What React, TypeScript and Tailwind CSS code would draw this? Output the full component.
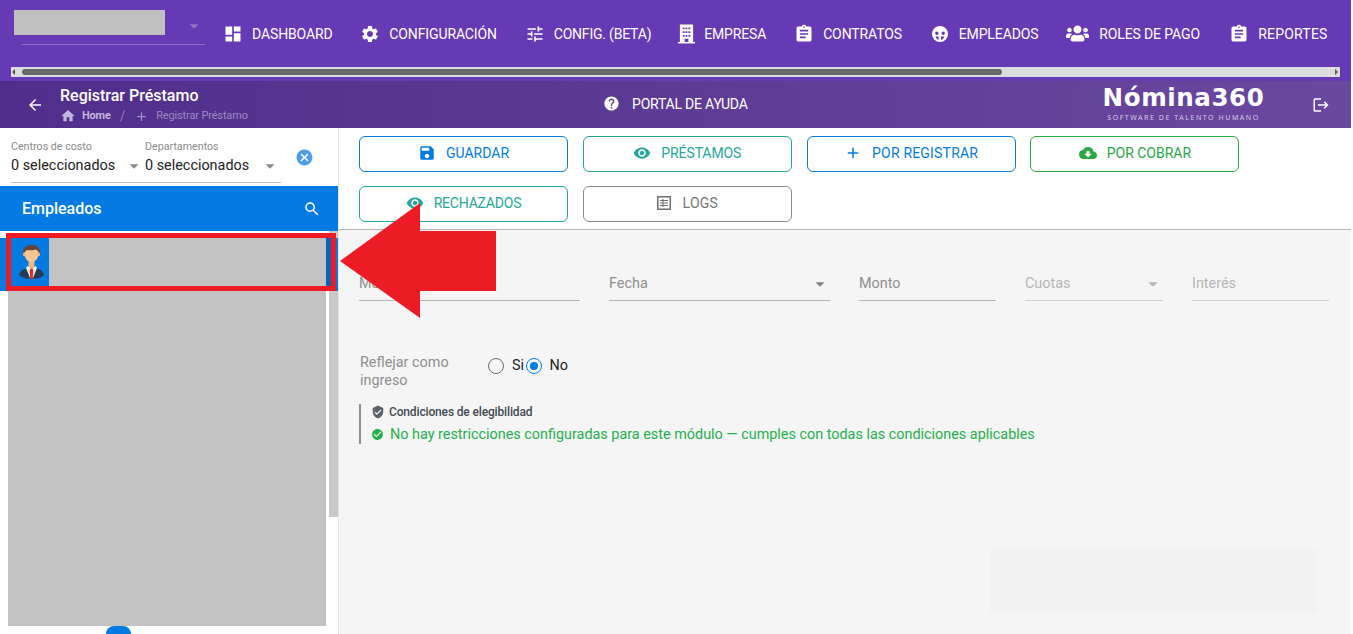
import React from "react";
import {
  MdDashboard, MdSettings, MdTune, MdAssignment, MdHelp, MdLogout, MdArrowBack,
  MdHome, MdAdd, MdSave, MdVisibility, MdCloudDownload, MdCancel, MdSearch, MdVerifiedUser, MdCheckCircle, MdArrowDropDown,
} from "react-icons/md";
import { FaUsers } from "react-icons/fa";

function BuildingIcon() {
  return (
    <svg width="17" height="20" viewBox="0 0 18 20" fill="currentColor">
      <path
        fillRule="evenodd"
        d="M2 0h14v18.500H2zM5 3v2h2V3zm3 0v2h2V3zm3 0v2h2V3zM5 7v2h2V7zm3 0v2h2V7zm3 0v2h2V7zM5 11v2h2v-2zm3 0v2h2v-2zm3 0v2h2v-2zM7 15v3.500h4V15z"
      />
      <rect x="0" y="18.500" width="18" height="1.500" />
    </svg>
  );
}

function FaceIcon() {
  return (
    <svg width="20" height="20" viewBox="0 0 20 20" fill="currentColor">
      <path
        fillRule="evenodd"
        d="M10 2a8 8 0 1 1 0 16 8 8 0 0 1 0-16zM6.800 7.500a1.700 1.700 0 1 0 0 3.400 1.700 1.700 0 0 0 0-3.400zm6.400 0a1.700 1.700 0 1 0 0 3.400 1.700 1.700 0 0 0 0-3.400zM5.500 12.500c.6 2 1.400 3 3 3.500v-3.500zm5.500 0V16c1.600-.5 2.800-1.500 3.500-3.500z"
      />
    </svg>
  );
}

function TableIcon() {
  return (
    <svg width="14" height="14" viewBox="0 0 14 14" fill="none" stroke="#6f6f6f">
      <rect x="0.750" y="0.750" width="12.500" height="12.500" strokeWidth="1.500" />
      <path d="M3 4.500h8M3 7h8M3 9.500h8M6 3v8" strokeWidth="1" />
    </svg>
  );
}

const nav = [
  { icon: <MdDashboard size={20} />, label: "DASHBOARD", cls: "gap-[9px]" },
  { icon: <MdSettings size={20} />, label: "CONFIGURACIÓN", cls: "gap-[9px]" },
  { icon: <MdTune size={20} />, label: "CONFIG. (BETA)", cls: "gap-[9px] tracking-[-0.2px]" },
  { icon: <BuildingIcon />, label: "EMPRESA", cls: "gap-[9px] -ml-[1px]" },
  { icon: <MdAssignment size={20} />, label: "CONTRATOS", cls: "gap-[9px]" },
  { icon: <FaceIcon />, label: "EMPLEADOS", cls: "gap-[9px]" },
  { icon: <FaUsers size={23} />, label: "ROLES DE PAGO", cls: "gap-[10px]" },
  { icon: <MdAssignment size={20} />, label: "REPORTES", cls: "gap-[9px] ml-[1.500px] tracking-[0.2px]" },
];

function Avatar() {
  return (
    <svg width="38" height="48" viewBox="0 0 38 48">
      <path d="M8 37c1-5 6-7 12.500-8 6.500 1 11.500 3 12.500 8-3 3-8 4-12.500 4S11 40 8 37z" fill="#263d54" />
      <path d="M16.500 28l4 2 4-2 1.500 2-4 10h-3l-4-10z" fill="#f1f1f1" />
      <path d="M19.300 30.500h2.400l.6 2.500-.6 8h-2.400l-.6-8z" fill="#d32f2f" />
      <rect x="17.500" y="22" width="6" height="8" rx="2" fill="#f0b681" />
      <ellipse cx="20.500" cy="16" rx="7" ry="8" fill="#f8c592" />
      <rect x="12" y="14" width="2.500" height="4" rx="1" fill="#f0b681" />
      <rect x="26.500" y="14" width="2.500" height="4" rx="1" fill="#f0b681" />
      <path d="M12.500 16c-1-6 2.500-9 8-9s9 3 8 9c-1-2.500-2-4-4-4.500-3 1-6 1-8.500.5-1.500 1-3 2-3.500 4z" fill="#6a4238" />
    </svg>
  );
}

function ActionButton({ icon, label, cls, gap = "gap-[10px]" }: { icon: React.ReactNode; label: string; cls: string; gap?: string }) {
  return (
    <button className={`w-[209px] h-9 rounded-md border bg-white flex items-center justify-center text-sm pb-[2px] ${gap} ${cls}`}>
      {icon}
      <span>{label}</span>
    </button>
  );
}

function Field({ label, w, caret, dim }: { label: string; w: string; caret?: boolean; dim?: boolean }) {
  return (
    <div className={`${w} h-[35px] flex items-center justify-between border-b ${dim ? "border-[#cfcfcf] text-[#b5b5b5]" : "border-[#b5b5b5] text-[#8f8f8f]"} text-[14.400px] pt-[1px]`}>
      <span>{label}</span>
      {caret && <MdArrowDropDown size={22} className={`-mr-[1px] ${dim ? "text-[#b5b5b5]" : "text-[#808080]"}`} />}
    </div>
  );
}

function Filter({ label, w }: { label: string; w: string }) {
  return (
    <div className={`${w} flex flex-col`}>
      <span className="text-[10.700px] leading-[13px] text-[#8a8a8a]">{label}</span>
      <div className="flex items-center justify-between text-[14.400px] leading-[20px] text-[#222] mt-[2px]">
        <span>0 seleccionados</span>
        <MdArrowDropDown size={22} className="text-[#8a8a8a]" />
      </div>
    </div>
  );
}

export default function App() {
  return (
    <div className="relative w-[1353px] h-[634px] overflow-hidden bg-white flex flex-col font-['Roboto',sans-serif] pr-[2px]">
      {/* Top bar */}
      <header className="h-[81px] bg-[#6639b5] flex flex-col shrink-0">
        <div className="h-[67px] flex items-center">
          <div className="w-[191px] ml-[14px] shrink-0 flex flex-col self-start mt-[10px]">
            <div className="flex items-center justify-between h-[25px]">
              <div className="w-[151px] h-[25px] bg-[#c0c0c0]" />
              <MdArrowDropDown size={22} className="text-[#8e75c0] mt-[7px]" />
            </div>
            <div className="ml-[8px] h-px bg-[#8b6fc9] mt-[9px]" />
          </div>
          <nav className="flex items-center gap-[27.800px] ml-[18px] text-white text-sm tracking-[-0.12px] whitespace-nowrap">
            {nav.map((n) => (
              <div key={n.label} className={`flex items-center ${n.cls}`}>
                {n.icon}
                <span>{n.label}</span>
              </div>
            ))}
          </nav>
        </div>
        <div className="h-[10px] mx-[11px] w-[1329px] bg-[#dcdcdc] flex items-center px-[1px] relative">
          <div className="border-y-[3px] border-y-transparent border-r-[3px] border-r-[#555] mr-[7px]" />
          <div className="w-[980px] h-[6px] rounded-full bg-[#686868]" />
          <div className="ml-auto mr-[1px] border-y-[3px] border-y-transparent border-l-[3px] border-l-[#555]" />
        </div>
      </header>

      {/* Sub bar */}
      <div className="h-[47px] shrink-0 bg-gradient-to-r from-[#4f2e8c] to-[#6b489f] flex items-center text-white">
        <MdArrowBack size={18} className="ml-[26px] shrink-0" />
        <div className="ml-[16px] w-[498px] shrink-0 flex flex-col mt-[1px]">
          <span className="text-base leading-[20px] font-medium">Registrar Préstamo</span>
          <div className="flex items-center text-[11px] leading-[14px] text-[#b3a2d2] tracking-[-0.2px] mt-[2px]">
            <MdHome size={16} className="text-[#c3b6dd]" />
            <span className="ml-[6px] font-bold text-[#c3b6dd]">Home</span>
            <span className="ml-[9px] text-[14px] text-[#8e78b8]">/</span>
            <MdAdd size={15} className="ml-[9px] text-[#a08ec6]" />
            <span className="ml-[7px] text-[#9c89c2] tracking-[-0.15px]">Registrar Préstamo</span>
          </div>
        </div>
        <div className="ml-[45px] w-[500px] shrink-0 flex items-center gap-[12px] text-sm tracking-[-0.2px] -mt-[2px]">
          <MdHelp size={17} />
          <span>PORTAL DE AYUDA</span>
        </div>
        <div className="w-[175px] shrink-0 flex flex-col items-center -ml-[7px]">
          <span className="font-['DejaVu_Sans',sans-serif] text-[24.500px] leading-[24px] font-bold tracking-[0.600px] -mt-[1px] whitespace-nowrap">Nómina360</span>
          <span className="font-['Noto_Sans',sans-serif] text-[7px] leading-[9px] tracking-[1.550px] text-[#d5cbe6] mt-[3px] whitespace-nowrap">SOFTWARE DE TALENTO HUMANO</span>
        </div>
        <MdLogout size={18} className="ml-[41px] shrink-0" />
      </div>

      {/* Body */}
      <div className="flex-1 flex min-h-0">
        {/* Sidebar */}
        <aside className="w-[339px] shrink-0 border-r border-r-[#e3e3e3] flex flex-col">
          <div className="h-[58px] shrink-0 relative pl-[11px] pt-[12px]">
            <div className="w-[270px] h-[43px] flex border-b border-b-[#bdbdbd]">
              <Filter label="Centros de costo" w="w-[134px]" />
              <Filter label="Departamentos" w="w-[136px]" />
            </div>
            <MdCancel size={19} className="absolute left-[294.500px] top-[19.500px] text-[#4c9ee9]" />
          </div>
          <div className="h-[45px] shrink-0 bg-[#047be3] flex items-center justify-between pl-[22px] pr-[17px] text-white">
            <span className="text-base font-medium">Empleados</span>
            <MdSearch size={18} />
          </div>
          <div className="flex-1 flex min-h-0 relative">
            <div className="flex-1 flex flex-col pt-[7px]">
              <div className="h-[53px] bg-[#047be3] flex w-[338px] shrink-0">
                <div className="w-[11px]" />
                <div className="w-[38px]"><Avatar /></div>
                <div className="w-[277px] h-[48px] bg-[#c2c2c2]" />
                <div className="w-[5px] bg-[#0a63b8] h-[48px]" />
              </div>
              <div className="ml-[8px] w-[318px] h-[335px] bg-[#c2c2c2]" />
            </div>
            <div className="absolute right-0 top-0 w-[9px] h-[286px] bg-[#c9c9c9] [clip-path:polygon(0_0,100%_0,100%_7px,0_7px,0_60px,100%_60px,100%_100%,0_100%)]" />
            <div className="absolute left-[106px] bottom-[-8px] w-[25px] h-[16px] rounded-t-[8px] bg-[#047be3]" />
          </div>
        </aside>

        {/* Content */}
        <main className="flex-1 bg-[#f5f5f5] flex flex-col relative">
          <div className="h-[102px] shrink-0 bg-white border-b border-b-[#b4b4b4] pl-[20px] pt-[8px]">
            <div className="flex gap-x-[14.800px]">
              <ActionButton icon={<MdSave size={18} />} label="GUARDAR" cls="border-[#047be3] text-[#047be3]" />
              <ActionButton icon={<MdVisibility size={18} />} label="PRÉSTAMOS" cls="border-[#26a69a] text-[#26a69a] tracking-[-0.1px]" />
              <ActionButton icon={<MdAdd size={18} />} label="POR REGISTRAR" cls="border-[#047be3] text-[#047be3] tracking-[0.2px]" />
              <ActionButton icon={<MdCloudDownload size={18} />} label="POR COBRAR" cls="border-[#28a745] text-[#28a745]" />
            </div>
            <div className="flex gap-[14.800px] mt-[14px]">
              <ActionButton icon={<MdVisibility size={18} />} label="RECHAZADOS" cls="border-[#26a69a] text-[#26a69a] tracking-[-0.2px]" />
              <ActionButton icon={<TableIcon />} label="LOGS" gap="gap-[12px]" cls="border-[#8a8a8a] text-[#757575] tracking-[0.2px]" />
            </div>
          </div>

          <div className="pl-[20px] pr-[22px] pt-[36px]">
            <div className="flex gap-[29px]">
              <Field label="Motivo" w="w-[221px]" />
              <Field label="Fecha" w="w-[221px]" caret />
              <Field label="Monto" w="w-[137px]" />
              <Field label="Cuotas" w="w-[138px]" caret dim />
              <Field label="Interés" w="w-[137px]" dim />
            </div>
            <div className="flex mt-[53px]">
              <div className="w-[129px] text-[14.400px] leading-[18px] text-[#8f8f8f] pl-[1px]">Reflejar como<br />ingreso</div>
              <div className="flex items-center h-[18px] mt-[3px] text-[14.400px] text-[#222]">
                <div className="w-4 h-4 rounded-full border-[1.500px] border-[#6b6b6b]" />
                <span className="ml-[8px]">Si</span>
                <div className="ml-[1.500px] w-4 h-4 rounded-full border-[1.500px] border-[#047be3] flex items-center justify-center">
                  <div className="w-2 h-2 rounded-full bg-[#047be3]" />
                </div>
                <span className="ml-[8px]">No</span>
              </div>
            </div>
            <div className="mt-[14px] border-l-2 border-l-[#8c9199] pl-[10px] h-[40px] flex flex-col">
              <div className="flex items-center gap-[4px] h-[16px] text-xs font-medium text-[#424a52] tracking-[-0.15px]">
                <MdVerifiedUser size={14} className="text-[#5a626b]" />
                <span>Condiciones de elegibilidad</span>
              </div>
              <div className="flex items-center gap-[6px] mt-[6px] text-[14.400px] text-[#22b14c] h-[17px]">
                <MdCheckCircle size={13} />
                <span>No hay restricciones configuradas para este módulo — cumples con todas las condiciones aplicables</span>
              </div>
            </div>
          </div>
          <div className="absolute left-[651px] top-[421px] w-[326px] h-[64px] bg-[#f2f2f2]" />
        </main>
      </div>

      {/* Annotation */}
      <div className="absolute left-[6px] top-[233px] w-[330px] h-[58px] border-[5px] border-[#ed1c24]" />
      <svg className="absolute left-[340px] top-[203px]" width="157" height="116" viewBox="0 0 157 116">
        <polygon points="0,58 80,0 80,28 156,28 156,88 80,88 80,115" fill="#ed1c24" />
      </svg>
    </div>
  );
}
